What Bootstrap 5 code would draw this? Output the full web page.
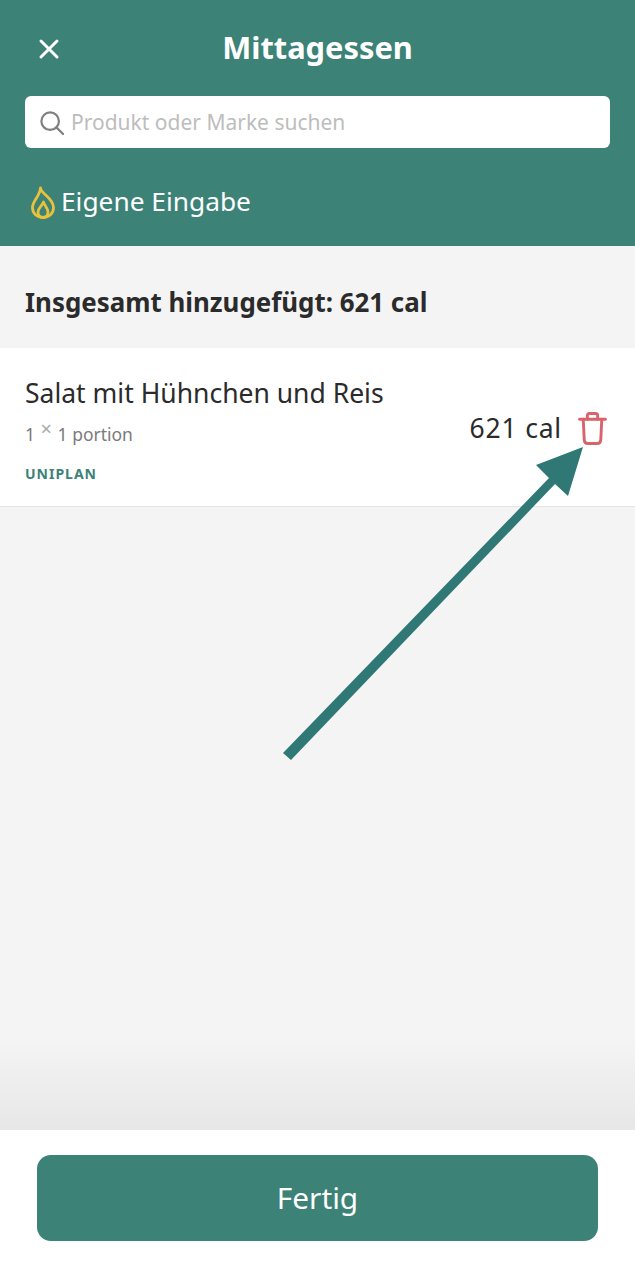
<!DOCTYPE html>
<html lang="de">
<head>
<meta charset="UTF-8">
<meta name="viewport" content="width=device-width, initial-scale=1.0">
<title>Mittagessen</title>
<link href="https://cdn.jsdelivr.net/npm/bootstrap@5.3.3/dist/css/bootstrap.min.css" rel="stylesheet">
<style>
body { font-family: "Noto Sans", "Liberation Sans", sans-serif; background: #f4f4f4; color: #2b2b2b; height: 1280px; }
.screen { height: 1280px; position: relative; overflow: hidden; }
.top-head { background: #3c8277; height: 246px; padding: 0 25px; }
.title-row { height: 96px; position: relative; }
.title-row h1 { font-size: 30.8px; font-weight: 700; margin: 0; line-height: 94px; color: #fff; }
.close-x { position: absolute; left: 13px; top: 38px; width: 22px; height: 22px; }
.search-box { height: 52px; border-radius: 6px; padding: 2px 0 0 15px; gap: 7px; }
.search-box span { font-size: 21px; color: #bdbdbd; }
.own-entry { height: 98px; padding-left: 6px; padding-top: 10px; gap: 6px; font-size: 26.3px; color: #fff; }
.total-row { height: 102px; padding: 10px 25px 0; font-size: 25.9px; font-weight: 700; }
.food-item { height: 159px; padding: 0 25px 0; border-bottom: 1px solid #e4e4e4; }
.food-name { font-size: 26.5px; line-height: 32px; padding-top: 29px; }
.food-portion { font-size: 17.5px; line-height: 24px; margin-top: 13px; color: #7b7b7b; }
.food-portion i { font-style: normal; font-size: 20px; color: #aaa; position: relative; top: -5px; margin: 0 1px; }
.food-tag { font-size: 14px; font-weight: 700; letter-spacing: 1px; color: #3c8277; margin-top: 18px; line-height: 20px; }
.food-cal { font-size: 26.5px; letter-spacing: .8px; gap: 16px; padding-top: 3px; padding-right: 3px; }
.spacer-wrap { flex: 1; display: flex; flex-direction: column; }
.spacer-top { flex: 1; }
.spacer-shade { height: 90px; background: linear-gradient(to bottom, #f4f4f4, #e7e7e7); }
.bottom-bar { height: 150px; padding: 25px 37px 0; }
.done-btn { height: 86px; width: 100%; background: #3c8277; border: 0; border-radius: 14px; color: #fff; font-size: 29.8px; }
.arrow-over { position: absolute; left: 0; top: 0; pointer-events: none; }
</style>
</head>
<body>
<div class="screen d-flex flex-column">
  <div class="top-head">
    <div class="title-row text-center">
      <svg class="close-x" viewBox="0 0 22 22" fill="none" stroke="#fff" stroke-width="3" stroke-linecap="round"><path d="M3 3 19 19M19 3 3 19"/></svg>
      <h1>Mittagessen</h1>
    </div>
    <div class="search-box bg-white d-flex align-items-center">
      <svg width="24" height="24" viewBox="0 0 26 26" fill="none" stroke="#808080" stroke-width="2.4" stroke-linecap="round"><circle cx="11" cy="11" r="9.5"/><path d="M18 18 25 25"/></svg>
      <span>Produkt oder Marke suchen</span>
    </div>
    <div class="own-entry d-flex align-items-center">
      <svg width="24" height="33" viewBox="0 0 24 33" fill="none" stroke="#e8c23c" stroke-width="2.8" stroke-linejoin="round"><path d="M9.500 2C10 8 22.500 12 22.500 21.500 22.500 27.500 18 31.500 12 31.500S1.500 27.500 1.500 21.500C1.500 15 9 10 9.500 2Z"/><path d="M12.500 16C13.500 20 17 22 17 26 17 29 15 31.500 12 31.500S7 29 7 26C7 22 11 20 12.500 16Z"/></svg>
      <span>Eigene Eingabe</span>
    </div>
  </div>

  <div class="total-row d-flex align-items-center">Insgesamt hinzugefügt: 621 cal</div>

  <div class="food-item bg-white d-flex justify-content-between">
    <div>
      <div class="food-name">Salat mit Hühnchen und Reis</div>
      <div class="food-portion">1 <i>×</i> 1 portion</div>
      <div class="food-tag">UNIPLAN</div>
    </div>
    <div class="food-cal d-flex align-items-center">
      <span>621 cal</span>
      <svg width="29" height="33" viewBox="0 0 28 32" fill="none" stroke="#d9636b" stroke-width="2.8" stroke-linecap="round" stroke-linejoin="round"><path d="M1.500 7H26.500"/><path d="M9 7V3.500C9 2.300 9.800 1.500 11 1.500H17C18.200 1.500 19 2.300 19 3.500V7"/><path d="M5 7 6 27C6.100 29 7.500 30.500 9.500 30.500H18.500C20.500 30.500 21.900 29 22 27L23 7"/></svg>
    </div>
  </div>

  <div class="spacer-wrap">
    <div class="spacer-top"></div>
    <div class="spacer-shade"></div>
  </div>

  <div class="bottom-bar bg-white">
    <button type="button" class="btn done-btn">Fertig</button>
  </div>

  <svg class="arrow-over" width="635" height="1280" viewBox="0 0 635 1280"><polygon fill="#2f7875" points="583,447 536,465 549,478 283,753 291,760 555,484 568,496"/></svg>
</div>
<script src="https://cdn.jsdelivr.net/npm/bootstrap@5.3.3/dist/js/bootstrap.bundle.min.js"></script>
</body>
</html>
